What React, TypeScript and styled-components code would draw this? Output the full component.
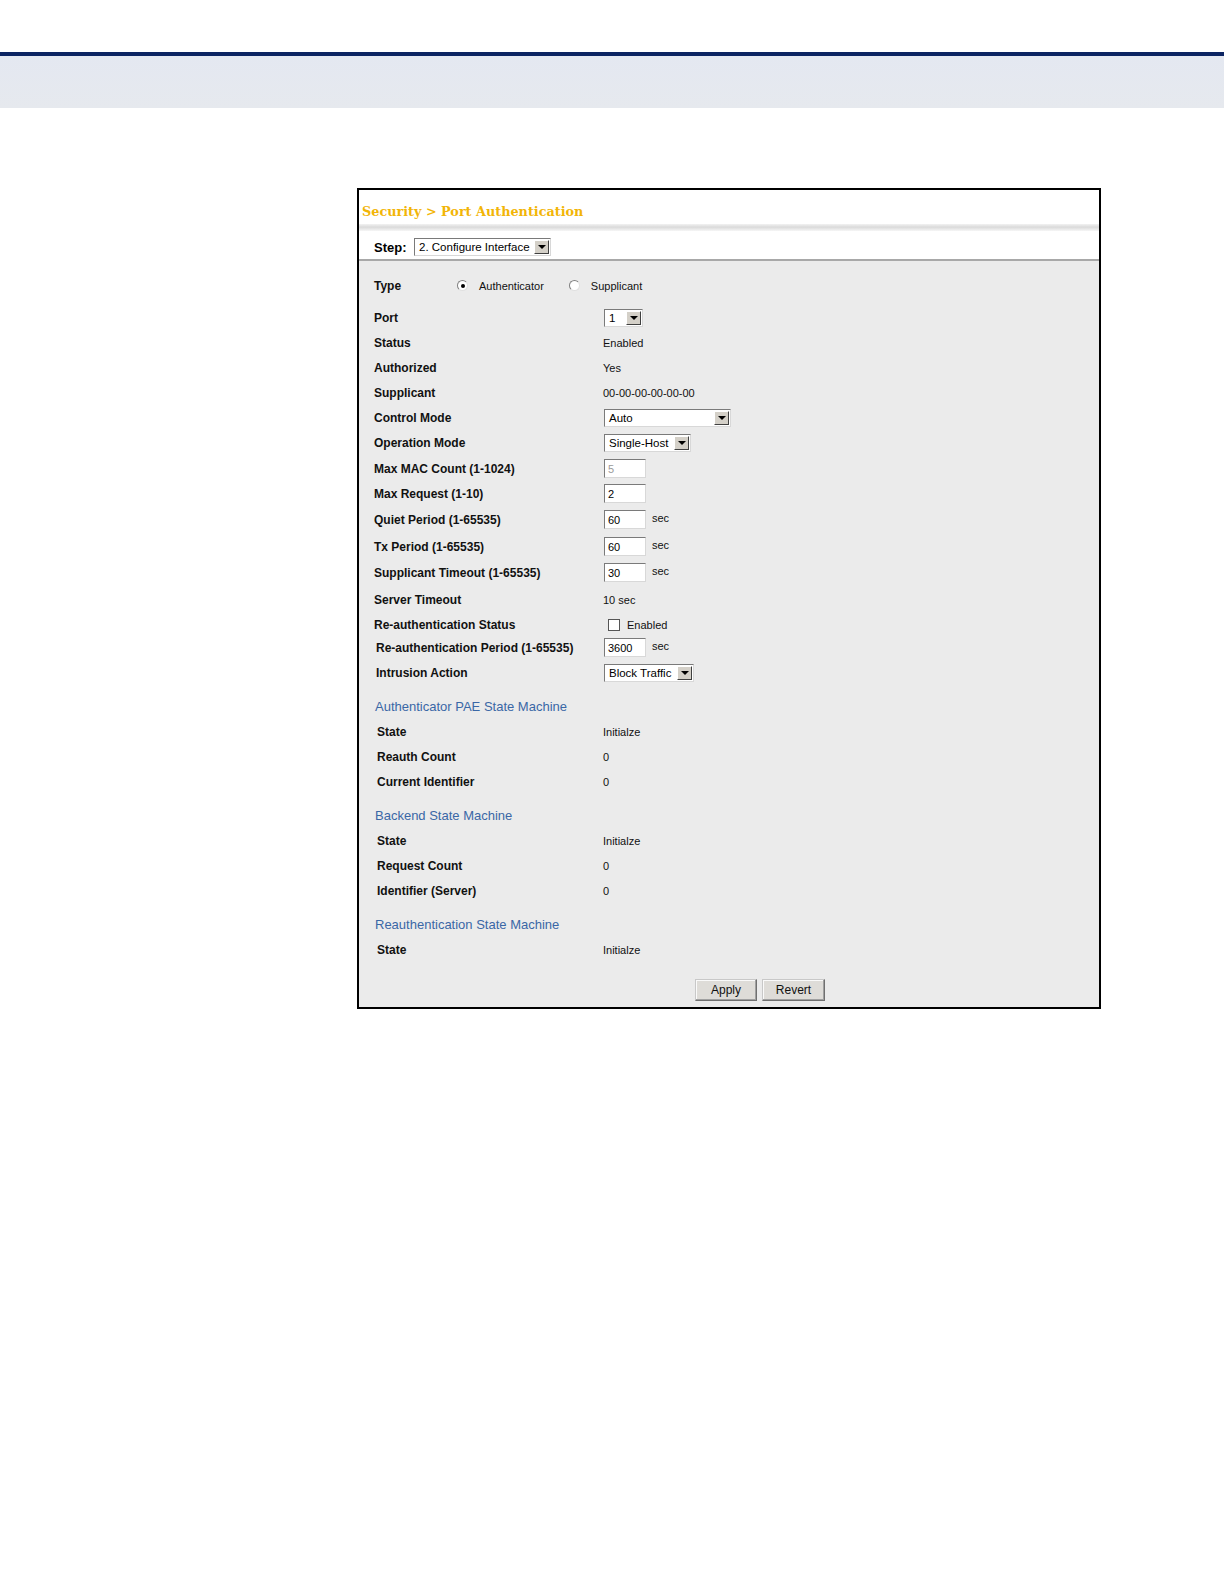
import React from "react";
import styled, { createGlobalStyle } from "styled-components";

const GlobalStyle = createGlobalStyle`
  html, body {
    margin: 0;
    padding: 0;
    background: #fff;
    font-family: "Liberation Sans", Arial, sans-serif;
  }
`;

const Page = styled.div`
  width: 1224px;
  min-height: 1584px;
  padding-top: 52px;
  box-sizing: border-box;
`;

const NavyBar = styled.div`
  height: 4px;
  background: #0b2462;
`;

const Band = styled.div`
  height: 52px;
  background: linear-gradient(#e4e8f1, #e6e9ee);
`;

const Frame = styled.div`
  width: 744px;
  margin: 80px 0 0 357px;
  border: 2px solid #000;
  box-sizing: border-box;
  background: #fff;
`;

const TitleBar = styled.div`
  height: 34px;
  padding-left: 3px;
  display: flex;
  align-items: flex-end;
  padding-bottom: 5px;
  box-sizing: border-box;
  font-family: "DejaVu Serif", "Liberation Serif", serif;
  font-weight: bold;
  font-size: 12.8px;
  color: #f2b507;
`;

const Shade = styled.div`
  height: 7px;
  background: linear-gradient(#f2f2f2, #dadada 45%, #f6f6f6);
`;

const StepRow = styled.div`
  height: 30px;
  display: flex;
  align-items: center;
  padding: 4px 0 0 15px;
  border-bottom: 2px solid #a8a8a8;
  box-sizing: border-box;
`;

const StepLabel = styled.span`
  font-weight: bold;
  font-size: 13px;
  color: #000;
  width: 40px;
`;

const Body = styled.div`
  background: #ebebeb;
  padding: 12px 0 6px 15px;
`;

const Row = styled.div<{ $mt?: number; $indent?: number }>`
  height: 25px;
  display: flex;
  align-items: center;
  margin-top: ${(p) => p.$mt ?? 0}px;
  padding-left: ${(p) => p.$indent ?? 0}px;
`;

const Label = styled.div<{ $w?: number }>`
  width: ${(p) => p.$w ?? 229}px;
  flex-shrink: 0;
  font-weight: bold;
  font-size: 12px;
  color: #111;
`;

const Value = styled.div`
  font-size: 11px;
  color: #111;
  display: flex;
  align-items: center;
`;

const SectionHead = styled.div<{ $mt?: number }>`
  height: 25px;
  display: flex;
  align-items: center;
  margin-top: ${(p) => p.$mt ?? 0}px;
  padding-left: 1px;
  font-size: 13px;
  color: #3a67a6;
`;

const Radio = styled.span<{ $on?: boolean }>`
  width: 11px;
  height: 11px;
  border-radius: 50%;
  box-sizing: border-box;
  border: 1px solid #808080;
  border-right-color: #e0e0e0;
  border-bottom-color: #e0e0e0;
  background: #fff;
  display: inline-flex;
  align-items: center;
  justify-content: center;
  margin-right: 11px;
  &::after {
    content: "";
    width: 4px;
    height: 4px;
    border-radius: 50%;
    background: ${(p) => (p.$on ? "#000" : "transparent")};
  }
`;

const RadioText = styled.span<{ $gap?: number }>`
  font-size: 11px;
  color: #111;
  margin-right: ${(p) => p.$gap ?? 0}px;
`;

const SelectBox = styled.div<{ $w: number }>`
  width: ${(p) => p.$w}px;
  height: 18px;
  box-sizing: border-box;
  border: 1px solid #7a7a7a;
  border-right-color: #d8d8d8;
  border-bottom-color: #d8d8d8;
  background: #fff;
  display: flex;
  align-items: center;
  justify-content: space-between;
  padding: 0 1px 0 4px;
  font-size: 11.5px;
  color: #000;
  white-space: nowrap;
`;

const Arrow = styled.span`
  width: 15px;
  height: 14px;
  flex-shrink: 0;
  box-sizing: border-box;
  background: #d4d0c8;
  border: 1px solid #fff;
  border-right-color: #404040;
  border-bottom-color: #404040;
  display: flex;
  align-items: center;
  justify-content: center;
  &::after {
    content: "";
    border-left: 4px solid transparent;
    border-right: 4px solid transparent;
    border-top: 4px solid #000;
  }
`;

const TextBox = styled.div<{ $muted?: boolean }>`
  width: 42px;
  height: 19px;
  box-sizing: border-box;
  margin-left: 1px;
  border: 1px solid #7a7a7a;
  border-right-color: #d8d8d8;
  border-bottom-color: #d8d8d8;
  background: #fff;
  display: flex;
  align-items: center;
  padding-left: 3px;
  font-size: 11px;
  color: ${(p) => (p.$muted ? "#9a9a9a" : "#000")};
`;

const Unit = styled.span`
  font-size: 11px;
  color: #111;
  margin-left: 6px;
  margin-top: -3px;
`;

const Check = styled.span`
  width: 12px;
  height: 12px;
  box-sizing: border-box;
  border: 1px solid #555;
  background: #fff;
  margin: 0 7px 0 5px;
`;

const ButtonRow = styled.div`
  display: flex;
  gap: 5px;
  margin: 17px 0 0 321px;
`;

const Button = styled.div<{ $w: number }>`
  width: ${(p) => p.$w}px;
  height: 22px;
  box-sizing: border-box;
  border: 1px solid #707070;
  border-top-color: #c8c8c8;
  border-left-color: #c8c8c8;
  box-shadow: inset -1px -1px 0 #a0a0a0, inset 1px 1px 0 #fafafa;
  background: #dedcd8;
  display: flex;
  align-items: center;
  justify-content: center;
  font-size: 12px;
  color: #111;
`;

const Select = ({ w, text }: { w: number; text: string }) => (
  <SelectBox $w={w}>
    <span>{text}</span>
    <Arrow />
  </SelectBox>
);

type Info = { label: string; value: string };

const paeRows: Info[] = [
  { label: "State", value: "Initialze" },
  { label: "Reauth Count", value: "0" },
  { label: "Current Identifier", value: "0" },
];

const backendRows: Info[] = [
  { label: "State", value: "Initialze" },
  { label: "Request Count", value: "0" },
  { label: "Identifier (Server)", value: "0" },
];

const SubRows = ({ rows }: { rows: Info[] }) => (
  <>
    {rows.map((r, i) => (
      <Row key={i} $indent={3}>
        <Label $w={226}>{r.label}</Label>
        <Value>{r.value}</Value>
      </Row>
    ))}
  </>
);

export default function App() {
  return (
    <Page>
      <GlobalStyle />
      <NavyBar />
      <Band />
      <Frame>
        <TitleBar>Security &gt; Port Authentication</TitleBar>
        <Shade />
        <StepRow>
          <StepLabel>Step:</StepLabel>
          <Select w={137} text="2. Configure Interface" />
        </StepRow>
        <Body>
          <Row>
            <Label $w={83}>Type</Label>
            <Radio $on />
            <RadioText $gap={25}>Authenticator</RadioText>
            <Radio />
            <RadioText>Supplicant</RadioText>
          </Row>
          <Row $mt={7}>
            <Label>Port</Label>
            <Value style={{ marginLeft: 1 }}>
              <Select w={39} text="1" />
            </Value>
          </Row>
          <Row>
            <Label>Status</Label>
            <Value>Enabled</Value>
          </Row>
          <Row>
            <Label>Authorized</Label>
            <Value>Yes</Value>
          </Row>
          <Row>
            <Label>Supplicant</Label>
            <Value>00-00-00-00-00-00</Value>
          </Row>
          <Row>
            <Label>Control Mode</Label>
            <Value style={{ marginLeft: 1 }}>
              <Select w={127} text="Auto" />
            </Value>
          </Row>
          <Row>
            <Label>Operation Mode</Label>
            <Value style={{ marginLeft: 1 }}>
              <Select w={87} text="Single-Host" />
            </Value>
          </Row>
          <Row $mt={1}>
            <Label>Max MAC Count (1-1024)</Label>
            <TextBox $muted>5</TextBox>
          </Row>
          <Row>
            <Label>Max Request (1-10)</Label>
            <TextBox>2</TextBox>
          </Row>
          <Row $mt={1}>
            <Label>Quiet Period (1-65535)</Label>
            <TextBox>60</TextBox>
            <Unit>sec</Unit>
          </Row>
          <Row $mt={2}>
            <Label>Tx Period (1-65535)</Label>
            <TextBox>60</TextBox>
            <Unit>sec</Unit>
          </Row>
          <Row $mt={1}>
            <Label>Supplicant Timeout (1-65535)</Label>
            <TextBox>30</TextBox>
            <Unit>sec</Unit>
          </Row>
          <Row $mt={2}>
            <Label>Server Timeout</Label>
            <Value>10 sec</Value>
          </Row>
          <Row>
            <Label>Re-authentication Status</Label>
            <Check />
            <Value>Enabled</Value>
          </Row>
          <Row $mt={-2} $indent={2}>
            <Label $w={227}>Re-authentication Period (1-65535)</Label>
            <TextBox>3600</TextBox>
            <Unit>sec</Unit>
          </Row>
          <Row $indent={2}>
            <Label $w={227}>Intrusion Action</Label>
            <Value style={{ marginLeft: 1 }}>
              <Select w={90} text="Block Traffic" />
            </Value>
          </Row>
          <SectionHead $mt={9}>Authenticator PAE State Machine</SectionHead>
          <SubRows rows={paeRows} />
          <SectionHead $mt={9}>Backend State Machine</SectionHead>
          <SubRows rows={backendRows} />
          <SectionHead $mt={9}>Reauthentication State Machine</SectionHead>
          <SubRows rows={[{ label: "State", value: "Initialze" }]} />
          <ButtonRow>
            <Button $w={62}>Apply</Button>
            <Button $w={63}>Revert</Button>
          </ButtonRow>
        </Body>
      </Frame>
    </Page>
  );
}
